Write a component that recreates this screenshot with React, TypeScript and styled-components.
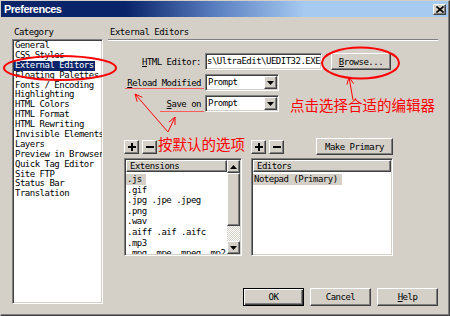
import React from "react";
import styled, { createGlobalStyle, css } from "styled-components";

const mono = `"DejaVu Sans Mono", "Liberation Mono", monospace`;

const Global = createGlobalStyle`
  * { box-sizing: border-box; }
  html, body { margin: 0; padding: 0; background: #d4d0c8; }
  body { font-family: ${mono}; font-size: 9px; color: #000; letter-spacing: -0.5px; }
`;

const raised = css`
  border: 1px solid;
  border-color: #ffffff #404040 #404040 #ffffff;
  box-shadow: inset -1px -1px #808080, inset 1px 1px #d4d0c8;
  background: #d4d0c8;
`;

const sunken = css`
  border: 1px solid;
  border-color: #808080 #ffffff #ffffff #808080;
  box-shadow: inset 1px 1px #404040, inset -1px -1px #d4d0c8;
  background: #ffffff;
`;

const Window = styled.div`
  position: relative;
  width: 450px;
  height: 316px;
  background: #d4d0c8;
  border: 1px solid;
  border-color: #d4d0c8 #404040 #404040 #d4d0c8;
  box-shadow: inset -1px -1px #808080;
  display: flex;
  flex-direction: column;
  overflow: hidden;
`;

const TitleBar = styled.div`
  height: 16px;
  margin-right: 1px;
  display: flex;
  align-items: center;
  justify-content: space-between;
  padding: 0 2px 0 3px;
  background: linear-gradient(90deg, #0a246a 0%, #0a246a 28%, #5a7fc0 48%, #a6caf0 68%, #a6caf0 100%);
`;

const Title = styled.span`
  font: bold 11px "Liberation Sans", Arial, sans-serif;
  letter-spacing: -0.5px;
  color: #ffffff;
`;

const CloseButton = styled.div`
  ${raised};
  width: 13px;
  height: 11px;
  display: grid;
  place-items: center;
`;

const Body = styled.div`
  flex: 1;
  display: flex;
  gap: 5px;
  padding: 10px 11px 0 11px;
`;

const Sidebar = styled.div`
  width: 91px;
  display: flex;
  flex-direction: column;
`;

const Caption = styled.div`
  height: 10px;
  line-height: 10px;
  padding-left: 2px;
  margin-bottom: 2px;
`;

const CategoryList = styled.div`
  ${sunken};
  height: 265px;
  padding: 1px 1px 0 1px;
  overflow: hidden;
`;

const CategoryItem = styled.div`
  height: 9.9px;
  line-height: 9.9px;
  white-space: nowrap;
`;

const ItemText = styled.span<{ $selected?: boolean; $soft?: boolean }>`
  display: inline-block;
  padding: 0 1px;
  ${(p) =>
    p.$selected &&
    css`
      background: #0a246a;
      color: #ffffff;
    `}
  ${(p) =>
    p.$soft &&
    css`
      background: #d4d0c8;
      padding: 0 4px 0 1px;
    `}
`;

const Main = styled.div`
  flex: 1;
  display: flex;
  flex-direction: column;
`;

const SectionHead = styled.div`
  height: 13px;
  line-height: 10px;
  padding-left: 2px;
  border-bottom: 1px solid #808080;
  box-shadow: 0 1px #ffffff;
`;

const Form = styled.div`
  margin-top: 13px;
  display: grid;
  grid-template-columns: 94px auto;
  column-gap: 3px;
  row-gap: 4px;
  align-items: center;
  justify-items: start;
`;

const FieldLabel = styled.span`
  justify-self: end;
  padding-right: 1px;
  white-space: nowrap;
`;

const FieldRow = styled.div`
  display: flex;
  gap: 9px;
  align-items: center;
`;

const TextField = styled.div`
  ${sunken};
  width: 117px;
  height: 17px;
  line-height: 15px;
  padding-left: 1px;
  white-space: nowrap;
  overflow: hidden;
`;

const Button = styled.div<{ $w: number; $h?: number; $default?: boolean }>`
  ${raised};
  width: ${(p) => p.$w}px;
  height: ${(p) => p.$h ?? 17}px;
  display: flex;
  align-items: center;
  justify-content: center;
  white-space: nowrap;
  ${(p) =>
    p.$default &&
    css`
      border: 1px solid #000000;
      box-shadow: inset 1px 1px #ffffff, inset -1px -1px #404040, inset -2px -2px #808080;
    `}
`;

const Select = styled.div`
  ${sunken};
  width: 74px;
  height: 17px;
  display: flex;
  align-items: center;
  padding: 1px 1px 1px 2px;
`;

const SelectValue = styled.span`
  flex: 1;
  line-height: 13px;
`;

const ArrowBox = styled.div<{ $h?: number }>`
  ${raised};
  width: 13px;
  height: ${(p) => p.$h ?? 13}px;
  display: grid;
  place-items: center;
  flex: none;
`;

const ListsArea = styled.div`
  margin: 26px 0 0 16px;
  display: grid;
  grid-template-columns: 118px 142px;
  column-gap: 9px;
  row-gap: 3px;
`;

const Toolbar = styled.div`
  height: 17px;
  display: flex;
  align-items: center;
  gap: 3px;
`;

const Spacer = styled.div`
  flex: 1;
`;

const ListBox = styled.div`
  ${sunken};
  height: 98px;
  padding: 1px;
  display: flex;
`;

const ListMain = styled.div`
  flex: 1;
  min-width: 0;
  overflow: hidden;
`;

const ListHeader = styled.div`
  ${raised};
  height: 12px;
  line-height: 10px;
  padding-left: 3px;
`;

const ListItems = styled.div`
  padding-top: 2px;
`;

const ListItem = styled.div`
  height: 10.6px;
  line-height: 10.6px;
  white-space: nowrap;
`;

const Scrollbar = styled.div`
  width: 13px;
  display: flex;
  flex-direction: column;
`;

const Thumb = styled.div`
  ${raised};
  height: 53px;
`;

const Track = styled.div`
  flex: 1;
  background: repeating-conic-gradient(#ffffff 0 25%, #d4d0c8 0 50%) 0 0 / 2px 2px;
`;

const Footer = styled.div`
  margin-top: 32px;
  display: flex;
  justify-content: flex-end;
  gap: 6px;
`;

const Overlay = styled.svg`
  position: absolute;
  left: -1px;
  top: -1px;
  width: 450px;
  height: 316px;
  pointer-events: none;
`;

const Note = styled.div<{ $left: number; $top: number }>`
  position: absolute;
  left: ${(p) => p.$left}px;
  top: ${(p) => p.$top}px;
  font-family: "Noto Sans CJK SC", "Noto Sans", sans-serif;
  font-size: 14.5px;
  line-height: 16px;
  letter-spacing: 0;
  color: #ff0000;
  white-space: nowrap;
`;

const categories = [
  "General",
  "CSS Styles",
  "External Editors",
  "Floating Palettes",
  "Fonts / Encoding",
  "Highlighting",
  "HTML Colors",
  "HTML Format",
  "HTML Rewriting",
  "Invisible Elements",
  "Layers",
  "Preview in Browser",
  "Quick Tag Editor",
  "Site FTP",
  "Status Bar",
  "Translation",
];

const extensions = [
  ".js",
  ".gif",
  ".jpg .jpe .jpeg",
  ".png",
  ".wav",
  ".aiff .aif .aifc",
  ".mp3",
  ".mpg .mpe .mpeg .mp2",
];

const DownArrow = () => (
  <svg width="7" height="4" viewBox="0 0 7 4">
    <path d="M0 0h7L3.5 4z" fill="#000" />
  </svg>
);

const UpArrow = () => (
  <svg width="7" height="4" viewBox="0 0 7 4">
    <path d="M0 4h7L3.5 0z" fill="#000" />
  </svg>
);

const Plus = () => (
  <svg width="8" height="8" viewBox="0 0 8 8">
    <path d="M3 0h2v3h3v2H5v3H3V5H0V3h3z" fill="#000" />
  </svg>
);

const Minus = () => (
  <svg width="8" height="8" viewBox="0 0 8 8">
    <path d="M0 3h8v2H0z" fill="#000" />
  </svg>
);

const CloseX = () => (
  <svg width="8" height="7" viewBox="0 0 8 7">
    <path d="M0.5 0.5L7.5 6.5M7.5 0.5L0.5 6.5" stroke="#000" strokeWidth="1.6" />
  </svg>
);

const Dropdown = ({ value }: { value: string }) => (
  <Select>
    <SelectValue>{value}</SelectValue>
    <ArrowBox>
      <DownArrow />
    </ArrowBox>
  </Select>
);

export default function App() {
  return (
    <>
      <Global />
      <Window>
        <TitleBar>
          <Title>Preferences</Title>
          <CloseButton>
            <CloseX />
          </CloseButton>
        </TitleBar>
        <Body>
          <Sidebar>
            <Caption>Category</Caption>
            <CategoryList>
              {categories.map((c) => (
                <CategoryItem key={c}>
                  <ItemText $selected={c === "External Editors"}>{c}</ItemText>
                </CategoryItem>
              ))}
            </CategoryList>
          </Sidebar>
          <Main>
            <SectionHead>External Editors</SectionHead>
            <Form>
              <FieldLabel>
                <u>H</u>TML Editor:
              </FieldLabel>
              <FieldRow>
                <TextField>s\UltraEdit\UEDIT32.EXE</TextField>
                <Button $w={60}>
                  <u>B</u>rowse...
                </Button>
              </FieldRow>
              <FieldLabel>
                <u>R</u>eload Modified
              </FieldLabel>
              <Dropdown value="Prompt" />
              <FieldLabel>
                <u>S</u>ave on
              </FieldLabel>
              <Dropdown value="Prompt" />
            </Form>
            <ListsArea>
              <Toolbar>
                <Button $w={15} $h={14}>
                  <Plus />
                </Button>
                <Button $w={15} $h={14}>
                  <Minus />
                </Button>
              </Toolbar>
              <Toolbar>
                <Button $w={15} $h={14}>
                  <Plus />
                </Button>
                <Button $w={15} $h={14}>
                  <Minus />
                </Button>
                <Spacer />
                <Button $w={77}>Make Primary</Button>
              </Toolbar>
              <ListBox>
                <ListMain>
                  <ListHeader>Extensions</ListHeader>
                  <ListItems>
                    {extensions.map((e, i) => (
                      <ListItem key={e}>
                        <ItemText $soft={i === 0}>{e}</ItemText>
                      </ListItem>
                    ))}
                  </ListItems>
                </ListMain>
                <Scrollbar>
                  <ArrowBox>
                    <UpArrow />
                  </ArrowBox>
                  <Thumb />
                  <Track />
                  <ArrowBox>
                    <DownArrow />
                  </ArrowBox>
                </Scrollbar>
              </ListBox>
              <ListBox>
                <ListMain>
                  <ListHeader>Editors</ListHeader>
                  <ListItems>
                    <ListItem>
                      <ItemText $soft>Notepad (Primary)</ItemText>
                    </ListItem>
                  </ListItems>
                </ListMain>
              </ListBox>
            </ListsArea>
            <Footer>
              <Button $w={61} $h={18} $default>
                OK
              </Button>
              <Button $w={61} $h={18}>
                Cancel
              </Button>
              <Button $w={61} $h={18}>
                <u>H</u>elp
              </Button>
            </Footer>
          </Main>
        </Body>

        <Overlay viewBox="0 0 450 316">
          <g fill="none" stroke="#ff0000">
            <ellipse cx="60" cy="68" rx="56" ry="12" strokeWidth="2" />
            <ellipse cx="360.5" cy="63" rx="38.5" ry="15.5" strokeWidth="2" />
            <line x1="125" y1="88.5" x2="204" y2="88.5" stroke="#ff5a5a" strokeWidth="1" />
            <line x1="160" y1="111.5" x2="204" y2="111.5" stroke="#ff5a5a" strokeWidth="1" />
            <g strokeWidth="1">
              <path d="M168 132L135 94M142.3 97.3L135 94L137.2 101.7" />
              <path d="M168 132L175 117M175 125L175 117L168.9 122.1" />
              <path d="M353 100L349 77M353.6 83.6L349 77L346.9 84.7" />
            </g>
          </g>
        </Overlay>
        <Note $left={289} $top={96}>点击选择合适的编辑器</Note>
        <Note $left={157} $top={135}>按默认的选项</Note>
      </Window>
    </>
  );
}
